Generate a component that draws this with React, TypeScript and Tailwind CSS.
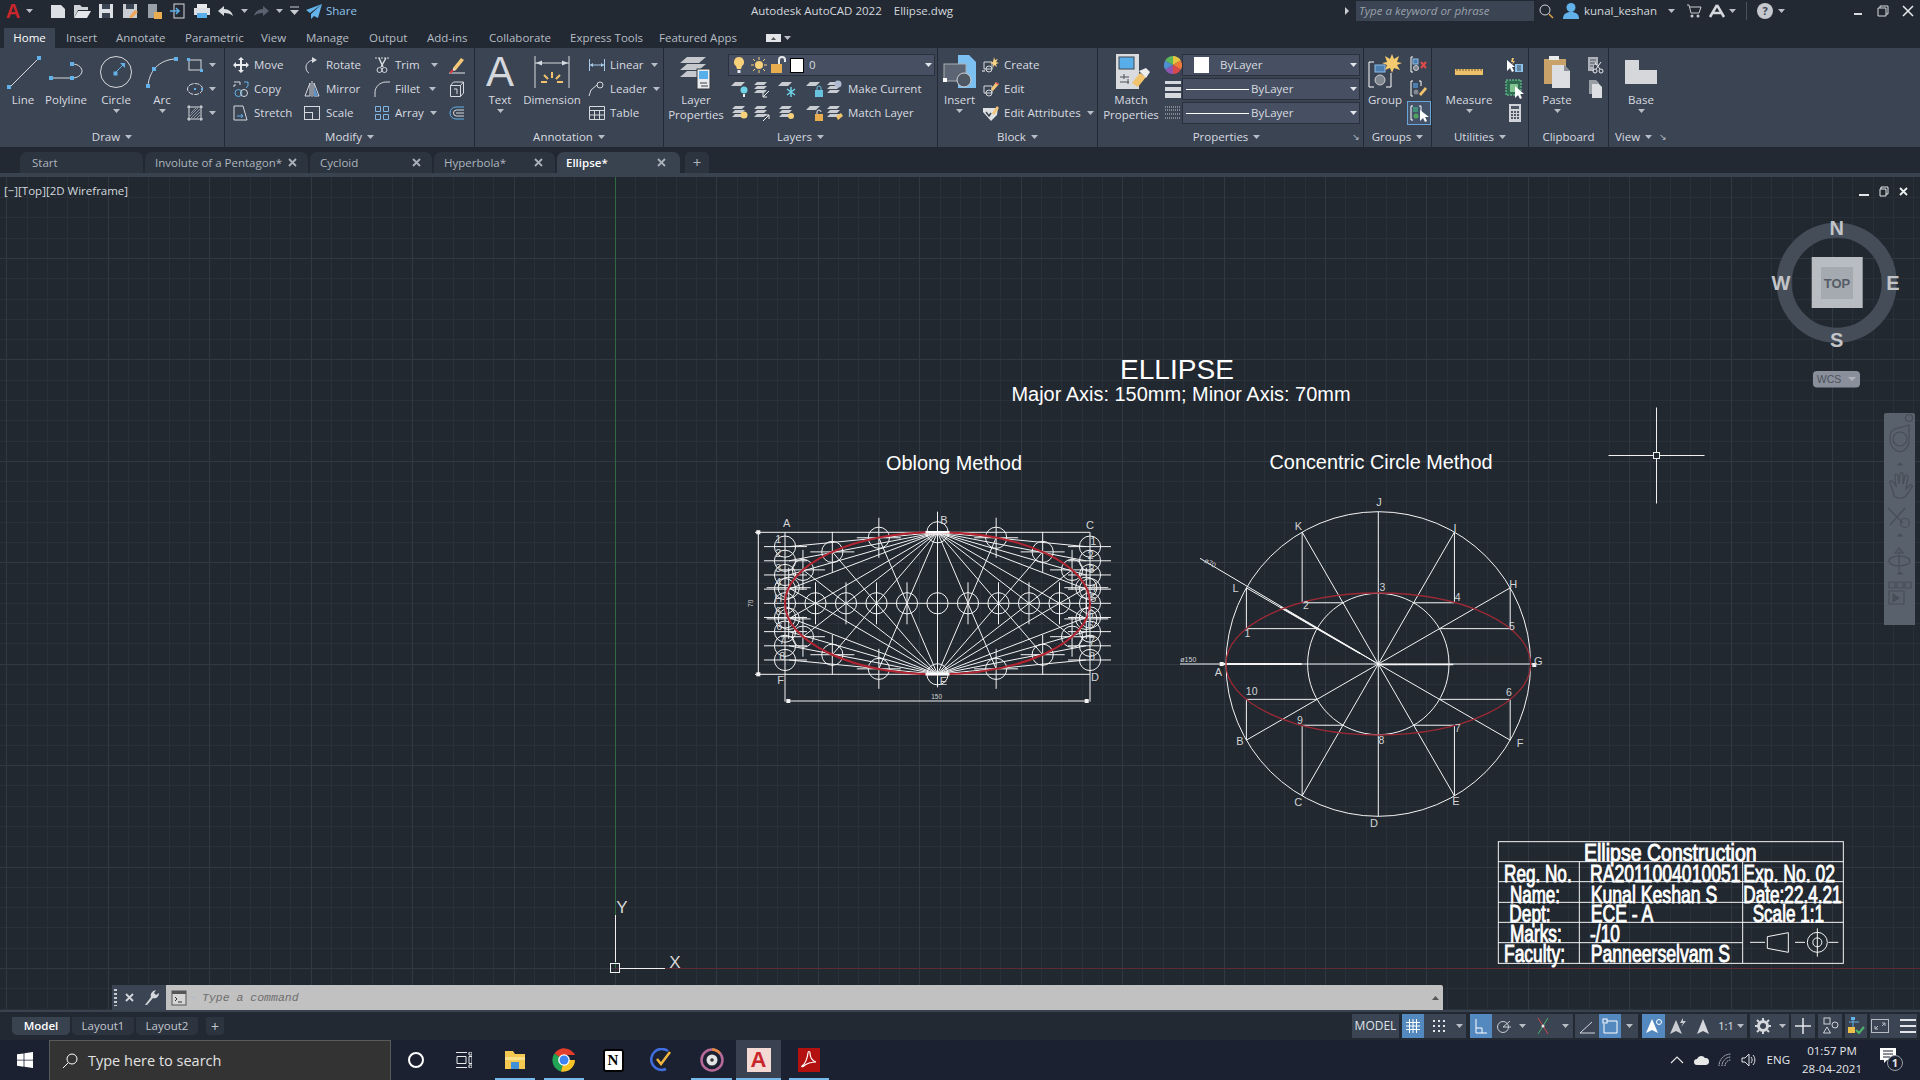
import type { ReactNode } from "react";

const GRIP = "#62b1e8";
const LT = "#d6d9de";

function Svg({ w = 18, h = 18, children }: { w?: number; h?: number; children: ReactNode }) {
  return (
    <svg width={w} height={h} viewBox={`0 0 ${w} ${h}`} fill="none" className="shrink-0">
      {children}
    </svg>
  );
}

function Caret({ light }: { light?: boolean }) {
  return (
    <svg width="7" height="4" viewBox="0 0 7 4" className="shrink-0">
      <path d="M0 0h7L3.5 4z" fill={light ? "#e2e5e9" : "#b9bec6"} />
    </svg>
  );
}

// ---------- ribbon icons ----------
const ic = {
  line: (
    <Svg w={40} h={36}>
      <path d="M7 33L35 5" stroke={LT} />
      <rect x="4" y="31" width="4" height="4" fill={GRIP} />
      <rect x="34" y="2" width="4" height="4" fill={GRIP} />
    </Svg>
  ),
  polyline: (
    <Svg w={46} h={36}>
      <path d="M8 24h21c8 0 10-5 10-7s-2-7-10-7" stroke={LT} />
      <rect x="6" y="22" width="4" height="4" fill={GRIP} />
      <rect x="27" y="22" width="4" height="4" fill={GRIP} />
      <rect x="27" y="8" width="4" height="4" fill={GRIP} />
    </Svg>
  ),
  circle: (
    <Svg w={46} h={36}>
      <circle cx="23" cy="18" r="15.5" stroke={LT} />
      <path d="M23 18l7-7" stroke={GRIP} />
      <path d="M27 9h5v5z" fill={GRIP} />
      <rect x="20.5" y="17.5" width="4" height="4" fill={GRIP} />
    </Svg>
  ),
  arc: (
    <Svg w={46} h={36}>
      <path d="M9 32C10 18 19 6 36 5" stroke={LT} />
      <rect x="7" y="30" width="4" height="4" fill={GRIP} />
      <rect x="35" y="3" width="4" height="4" fill={GRIP} />
      <rect x="13" y="13" width="4" height="4" fill={GRIP} />
    </Svg>
  ),
  rect: (
    <Svg>
      <rect x="3" y="4" width="12" height="10" stroke={LT} />
      <rect x="1" y="2" width="3" height="3" fill={GRIP} />
      <rect x="14" y="13" width="3" height="3" fill={GRIP} />
    </Svg>
  ),
  ell: (
    <Svg>
      <ellipse cx="9" cy="9" rx="7.5" ry="5.5" stroke={LT} strokeDasharray="5 1" />
      <rect x="8" y="8" width="2" height="2" fill={GRIP} />
      <rect x="15" y="8" width="2" height="2" fill={GRIP} />
    </Svg>
  ),
  hatch: (
    <Svg>
      <rect x="3" y="3" width="12" height="12" stroke={LT} />
      <path d="M4 12l8-8M4 15L15 4M7 15l8-8M5 9l5-5M10 15l5-5" stroke="#8a929e" />
      <path d="M1 3h3M3 1v3M14 15h3M15 14v3M1 15h3M3 14v3M14 3h3M15 1v3" stroke={LT} />
    </Svg>
  ),
  move: (
    <Svg>
      <path d="M9 1l3 3h-2v4h4V6l3 3-3 3v-2h-4v4h2l-3 3-3-3h2v-4H4v2L1 9l3-3v2h4V4H6z" fill="#e8eaed" />
    </Svg>
  ),
  copy: (
    <Svg>
      <path d="M2 2h6v3M1 6h2v-2" stroke={LT} />
      <path d="M12 2h4v4l-2 2" stroke={GRIP} />
      <circle cx="6.5" cy="13" r="3.5" stroke={GRIP} />
      <circle cx="12" cy="13" r="3.5" stroke={LT} />
    </Svg>
  ),
  stretch: (
    <Svg>
      <path d="M2 2h9l4 14H2z" stroke={LT} />
      <path d="M5 12h6M9 10l2 2-2 2" stroke={GRIP} />
    </Svg>
  ),
  rotate: (
    <Svg>
      <path d="M11 4C6 4 3 8 3 11c0 3 1 5 3 6" stroke={LT} />
      <path d="M9 1l5 3-5 3z" fill={LT} />
    </Svg>
  ),
  mirror: (
    <Svg>
      <path d="M7 3L2 16h5zM11 3l5 13h-5z" stroke={LT} />
      <path d="M9 1v16" stroke={LT} />
      <path d="M11 6l4 10h-4z" fill="#5d93c8" />
    </Svg>
  ),
  scale: (
    <Svg>
      <rect x="1.5" y="2.5" width="15" height="13" stroke={LT} />
      <rect x="1.5" y="8.5" width="8" height="7" stroke={LT} />
    </Svg>
  ),
  trim: (
    <Svg>
      <path d="M2 2h14" stroke={LT} strokeDasharray="2 1" />
      <path d="M6 2l4 9M13 2L8 11" stroke={LT} strokeWidth="1.5" />
      <circle cx="6.5" cy="14" r="2.5" stroke={LT} />
      <circle cx="11.5" cy="14" r="2.5" stroke={LT} />
    </Svg>
  ),
  fillet: (
    <Svg>
      <path d="M2 17v-5C2 7 7 2 13 2h4" stroke={LT} />
    </Svg>
  ),
  array: (
    <Svg>
      <path d="M2.5 2.5h5v5h-5zM10.5 2.5h5v5h-5zM2.5 10.5h5v5h-5zM10.5 10.5h5v5h-5z" stroke="#7fb6e6" />
    </Svg>
  ),
  erase: (
    <Svg>
      <path d="M5 12L13 2l3 2-8 10-3 1z" fill="#f3c778" />
      <path d="M5 12l3 2-3 1z" fill="#e8e8e8" />
      <path d="M1 17h16" stroke="#e4e6ea" />
      <path d="M2 17l3-3" stroke="#d93a3a" strokeWidth="2" />
    </Svg>
  ),
  explode: (
    <Svg>
      <path d="M2.5 5.5h10v11h-10zM2.5 5.5l3-3.5h10v11l-3 3.5M12.5 5.5l3-3.5" stroke={LT} />
      <path d="M6 9h3v5" stroke={LT} />
    </Svg>
  ),
  offset: (
    <Svg>
      <path d="M16 3H8a6 6 0 000 12h8" stroke={GRIP} />
      <path d="M16 6H8.5a3 3 0 000 6H16" stroke={LT} />
      <path d="M8 9h8" stroke={LT} />
    </Svg>
  ),
  textA: <span className="block text-[42px] leading-[40px] text-[#d4d7db] font-['Liberation_Sans',sans-serif]">A</span>,
  dim: (
    <Svg w={46} h={36}>
      <path d="M6 2v32M40 2v32" stroke={LT} />
      <path d="M6 9h34" stroke={LT} />
      <path d="M7 9l6-2.5v5zM39 9l-6-2.5v5z" fill={LT} />
      <path d="M23 18v6M15 21l4 4M31 21l-4 4M12 28h6M28 28h6" stroke="#f0c36c" strokeWidth="2" />
    </Svg>
  ),
  linear: (
    <Svg>
      <path d="M1.5 3v12M16.5 3v12M2 9h14" stroke="#a8cbea" />
      <path d="M2 9l3-2v4zM16 9l-3-2v4z" fill="#a8cbea" />
    </Svg>
  ),
  leader: (
    <Svg>
      <path d="M1 16l2-6 6-5" stroke={LT} />
      <circle cx="12" cy="5" r="3" stroke={LT} />
    </Svg>
  ),
  table: (
    <Svg>
      <path d="M1.5 2.5h15v13h-15zM1.5 6.5h15M1.5 11h15M6.5 6.5v9M11.5 6.5v9" stroke={LT} />
    </Svg>
  ),
  layers: (
    <Svg w={46} h={36}>
      <path d="M14 3h19l-7 6H7zM14 10h19l-7 6H7zM14 17h19l-7 6H7z" fill="#c5c8cd" />
      <rect x="24" y="15" width="13" height="20" fill="#e8eaec" stroke="#34393f" />
      <rect x="26" y="17" width="9" height="8" fill="#58aee8" />
      <path d="M27 29h7M28 32h7" stroke="#3a3f46" />
    </Svg>
  ),
  insert: (
    <Svg w={34} h={38}>
      <path d="M15 2h11l7 7v26H15z" fill="#7cc0f2" />
      <rect x="1" y="11" width="22" height="17" fill="#5c6573" stroke="#a9adb3" />
      <circle cx="21" cy="27" r="7" fill="#4f5865" stroke="#d0d2d6" />
      <rect x="0" y="25" width="4" height="4" fill="#fff" />
    </Svg>
  ),
  create: (
    <Svg>
      <path d="M2 6h8v7H2z" stroke={LT} />
      <circle cx="7" cy="13" r="3" stroke={LT} />
      <path d="M12 1l1 3 3-1-2 3 3 1-3 1 1 3-3-2-1 3V8L8 7l3-1z" fill="#f7d383" />
      <path d="M0 15h3" stroke="#fff" />
    </Svg>
  ),
  edit: (
    <Svg>
      <path d="M2 6h8v7H2z" stroke={LT} />
      <circle cx="7" cy="13" r="3" stroke={LT} />
      <path d="M9 9l5-7 3 2-6 7z" fill="#f3c778" />
      <path d="M14 2l3 2-1 1-3-2z" fill="#e05555" />
    </Svg>
  ),
  attrs: (
    <Svg>
      <path d="M1 4h8l7 0-1 7-6 6-8-9z" fill="#dfe1e4" />
      <path d="M4 8l3 4 2-3" stroke="#3b4453" strokeWidth="1.5" />
      <path d="M10 9l5-7 2 2-5 7z" fill="#f3c778" />
    </Svg>
  ),
  match: (
    <Svg w={46} h={38}>
      <rect x="8" y="1" width="23" height="35" fill="#d9dbde" />
      <rect x="11" y="4" width="15" height="12" fill="#58aee8" stroke="#3f4650" />
      <path d="M12 24h9M12 29h9M16 21v5M20 26v5" stroke="#4b5058" />
      <path d="M24 30l8-10 6 4-8 10z" fill="#f0c36c" />
      <path d="M31 18l7-3 4 4-4 6z" fill="#ededed" />
    </Svg>
  ),
  wheel: (
    <svg width="18" height="18" viewBox="0 0 18 18" className="shrink-0">
      <path d="M9 9V0a9 9 0 017.8 4.5z" fill="#e6c53f" />
      <path d="M9 9l7.8-4.5A9 9 0 0116.8 13.5z" fill="#ef7a3a" />
      <path d="M9 9l7.8 4.5A9 9 0 019 18z" fill="#d84a4a" />
      <path d="M9 9v9a9 9 0 01-7.8-4.5z" fill="#8f55b0" />
      <path d="M9 9L1.2 13.5a9 9 0 010-9z" fill="#4d8fd0" />
      <path d="M9 9L1.2 4.5A9 9 0 019 0z" fill="#5cb85c" />
    </svg>
  ),
  weight: (
    <Svg w={16} h={20}>
      <path d="M0 2h16v3H0zM0 8h16v4H0zM0 14h16v5H0z" fill="#d5d8dc" />
    </Svg>
  ),
  ltype: (
    <Svg w={16} h={16}>
      <path d="M0 2h16M0 5h16M0 9h16M0 13h16" stroke="#c7cacf" strokeDasharray="1 1" />
    </Svg>
  ),
  group: (
    <Svg w={42} h={38}>
      <path d="M10 9H5v25h5M22 34h5V20" stroke="#fff" />
      <rect x="11" y="12" width="10" height="7" fill="#4c7fb0" stroke="#90bde6" />
      <circle cx="16" cy="27" r="5" fill="#81878f" stroke="#c9ccd0" />
      <path d="M28 1l2 5 5-3-2 6 5 1-5 2 3 5-6-2-2 5-2-5-5 2 2-5-5-2 5-1-2-6 5 3z" fill="#f5c96e" />
    </Svg>
  ),
  ungroup: (
    <Svg>
      <path d="M3 1H1v15h2" stroke="#fff" />
      <rect x="3" y="3" width="5" height="5" fill="#4c7fb0" stroke="#90bde6" />
      <circle cx="6" cy="12" r="2.5" fill="#81878f" stroke="#c9ccd0" />
      <path d="M11 6l5 6M16 6l-5 6" stroke="#e04a4a" strokeWidth="2" />
    </Svg>
  ),
  gedit: (
    <Svg>
      <path d="M3 1H1v15h2M9 1h2v5" stroke="#fff" />
      <rect x="3" y="3" width="5" height="5" fill="#4c7fb0" />
      <circle cx="6" cy="12" r="2.5" fill="#81878f" />
      <path d="M9 14l6-7 2 2-6 7z" fill="#f0c36c" />
    </Svg>
  ),
  gsel: (
    <Svg w={22} h={22}>
      <path d="M5 4H3v14h2M11 4h2v6" stroke="#fff" />
      <rect x="5" y="5" width="5" height="5" fill="#3f8f7a" />
      <circle cx="8" cy="14" r="2.5" fill="#51a35c" />
      <path d="M12 8v11l3-3 2 4 2-1-2-4h4z" fill="#fff" />
    </Svg>
  ),
  measure: (
    <Svg w={46} h={28}>
      <rect x="9" y="11" width="28" height="6" fill="#eec06a" />
      <path d="M11 11v2M14 11v2M17 11v2M20 11v2M23 11v2M26 11v2M29 11v2M32 11v2M35 11v2" stroke="#6d5a30" />
    </Svg>
  ),
  qprops: (
    <Svg>
      <path d="M1 4v11l3-3 2 4 2-1-2-4h3z" fill="#fff" />
      <path d="M6 2l-1 4h2l-1 3 3-4H7l1-3z" fill="#f5c96e" />
      <rect x="9" y="8" width="8" height="8" fill="#8cc1ec" />
      <path d="M11 10h4M11 12h4M11 14h4" stroke="#3b4453" />
    </Svg>
  ),
  qsel: (
    <Svg w={20} h={22}>
      <rect x="1" y="2" width="15" height="15" fill="#2f6a52" stroke="#78d39a" strokeDasharray="2 1" />
      <rect x="5" y="6" width="8" height="8" fill="#7fc490" />
      <path d="M10 8v12l3-3 2 4 2-1-2-4h4z" fill="#fff" />
    </Svg>
  ),
  calc: (
    <Svg w={14} h={20}>
      <rect x="1" y="1" width="12" height="18" fill="#cfd2d6" />
      <rect x="3" y="3" width="8" height="3" fill="#4f5764" />
      <path d="M3 8h2v2H3zM6 8h2v2H6zM9 8h2v2H9zM3 11h2v2H3zM6 11h2v2H6zM9 11h2v2H9zM3 14h2v2H3zM6 14h2v2H6zM9 14h2v2H9z" fill="#4f5764" />
    </Svg>
  ),
  paste: (
    <Svg w={40} h={38}>
      <rect x="7" y="6" width="22" height="25" fill="#c9a26a" />
      <rect x="12" y="3" width="10" height="4" fill="#e9eaec" />
      <path d="M15 12h12l6 6v17H15z" fill="#dcdee1" />
      <path d="M27 12v6h6z" fill="#8a8e94" />
    </Svg>
  ),
  cut: (
    <Svg>
      <path d="M2 1h10v8H8v6H2z" fill="#aeb2b8" />
      <path d="M4 4h6M4 7h5M4 10h3" stroke="#4f5764" />
      <path d="M9 7l5 6M15 6l-5 7" stroke="#e8eaed" />
      <circle cx="9" cy="15" r="2" stroke="#e8eaed" />
      <circle cx="15" cy="15" r="2" stroke="#e8eaed" />
    </Svg>
  ),
  clipcopy: (
    <Svg w={16} h={20}>
      <path d="M2 1h7l3 3v11H2z" fill="#9a9ea5" />
      <path d="M5 5h7l3 3v11H5z" fill="#dcdee1" />
    </Svg>
  ),
  base: (
    <Svg w={40} h={36}>
      <path d="M4 6h14v10h18v14H4z" fill="#d5d7da" />
    </Svg>
  ),
};

function LayerGlyph({ accent, stack }: { accent: ReactNode; stack?: boolean }) {
  return (
    <Svg w={18} h={18}>
      {stack ? (
        <path d="M4 2h10l-3 3H1zM4 6h10l-3 3H1zM4 10h10l-3 3H1z" fill="#c9ccd1" />
      ) : (
        <path d="M4 2h10l-4 4H0z" fill="#c9ccd1" />
      )}
      {accent}
    </Svg>
  );
}

// ---------- ribbon layout ----------
function Lg({ className, icon, label, caret }: { className: string; icon: ReactNode; label: string[]; caret?: boolean }) {
  return (
    <div className={`flex flex-col items-center shrink-0 ${className}`}>
      <div className="h-[40px] flex items-center justify-center">{icon}</div>
      {label.map((l) => (
        <div key={l} className="leading-[15px] whitespace-nowrap">
          {l}
        </div>
      ))}
      {caret && (
        <div className="mt-[2px]">
          <Caret />
        </div>
      )}
    </div>
  );
}

function Sm({ icon, label, caret, gap = "ml-[3px]", caretGap = "ml-[8px]" }: { icon: ReactNode; label?: string; caret?: boolean; gap?: string; caretGap?: string }) {
  return (
    <div className="h-[24px] flex items-center whitespace-nowrap">
      <div className="w-[20px] flex justify-center shrink-0">{icon}</div>
      {label && <span className={gap}>{label}</span>}
      {caret && (
        <span className={caretGap}>
          <Caret />
        </span>
      )}
    </div>
  );
}

function Panel({ className, title, children, expander, left, noCaret, titleClass = "" }: { className: string; title: string; children: ReactNode; expander?: boolean; left?: boolean; noCaret?: boolean; titleClass?: string }) {
  return (
    <div className={`h-full shrink-0 flex flex-col border-r border-[#232a35] ${className}`}>
      <div className="h-[79px] flex items-start pt-[4px]">{children}</div>
      <div className={`h-[20px] relative flex items-center gap-[5px] ${left ? "pl-[6px]" : "justify-center"} ${titleClass}`}>
        <span>{title}</span>
        {!noCaret && <Caret />}
        {expander && <span className={left ? "ml-[2px] text-[9px] text-[#b9bec6]" : "absolute right-[3px] text-[9px] text-[#b9bec6]"}>↘</span>}
      </div>
    </div>
  );
}

function Drop({ className, children }: { className: string; children: ReactNode }) {
  return (
    <div className={`h-[22px] flex items-center bg-[#465062] border border-[#2a313c] ${className}`}>
      <div className="flex-1 flex items-center min-w-0">{children}</div>
      <span className="mr-[2px]">
        <Caret light />
      </span>
    </div>
  );
}

function Ribbon() {
  return (
    <div className="h-[99px] flex bg-[#3b4453] text-[#d8dbe0]">
      <Panel className="w-[225px]" title="Draw">
        <div className="flex">
          <Lg className="w-[40px] ml-[3px]" icon={ic.line} label={["Line"]} />
          <Lg className="w-[46px]" icon={ic.polyline} label={["Polyline"]} />
          <Lg className="w-[46px] ml-[4px]" icon={ic.circle} label={["Circle"]} caret />
          <Lg className="w-[46px]" icon={ic.arc} label={["Arc"]} caret />
          <div className="pt-[1px]">
            <Sm icon={ic.rect} caret caretGap="ml-[4px]" />
            <Sm icon={ic.ell} caret caretGap="ml-[4px]" />
            <Sm icon={ic.hatch} caret caretGap="ml-[4px]" />
          </div>
        </div>
      </Panel>
      <Panel className="w-[250px]" title="Modify">
        <div className="flex pt-[1px] pl-[6px]">
          <div className="w-[71px]">
            <Sm icon={ic.move} label="Move" />
            <Sm icon={ic.copy} label="Copy" />
            <Sm icon={ic.stretch} label="Stretch" />
          </div>
          <div className="w-[70px]">
            <Sm icon={ic.rotate} label="Rotate" gap="ml-[4px]" />
            <Sm icon={ic.mirror} label="Mirror" gap="ml-[4px]" />
            <Sm icon={ic.scale} label="Scale" gap="ml-[4px]" />
          </div>
          <div className="w-[75px]">
            <Sm icon={ic.trim} label="Trim" caret caretGap="ml-[11px]" />
            <Sm icon={ic.fillet} label="Fillet" caret caretGap="ml-[9px]" />
            <Sm icon={ic.array} label="Array" caret caretGap="ml-[6px]" />
          </div>
          <div>
            <Sm icon={ic.erase} />
            <Sm icon={ic.explode} />
            <Sm icon={ic.offset} />
          </div>
        </div>
      </Panel>
      <Panel className="w-[189px]" title="Annotation">
        <div className="flex">
          <Lg className="w-[50px]" icon={ic.textA} label={["Text"]} caret />
          <Lg className="w-[54px]" icon={ic.dim} label={["Dimension"]} />
          <div className="ml-[8px] pt-[1px]">
            <Sm icon={ic.linear} label="Linear" caret caretGap="ml-[7px]" />
            <Sm icon={ic.leader} label="Leader" caret caretGap="ml-[6px]" />
            <Sm icon={ic.table} label="Table" />
          </div>
        </div>
      </Panel>
      <Panel className="w-[274px]" title="Layers">
        <div className="flex">
          <Lg className="w-[64px]" icon={ic.layers} label={["Layer", "Properties"]} />
          <div className="w-[207px] pt-[2px]">
            <Drop className="w-[207px]">
              <div className="w-[20px] flex justify-center">
                <Svg w={12} h={18}>
                  <path d="M6 1a5 5 0 00-3 9l1 3h4l1-3a5 5 0 00-3-9z" fill="#f7d07a" />
                  <path d="M4.5 14h3v3h-3z" fill="#e6e8eb" />
                </Svg>
              </div>
              <div className="w-[20px] flex justify-center">
                <Svg w={16} h={16}>
                  <circle cx="8" cy="8" r="4" fill="#f7d07a" />
                  <path d="M8 0v3M8 13v3M0 8h3M13 8h3M2 2l2 2M12 12l2 2M14 2l-2 2M4 12l-2 2" stroke="#f7d07a" />
                </Svg>
              </div>
              <div className="w-[18px] flex justify-center">
                <Svg w={16} h={18}>
                  <rect x="1" y="8" width="11" height="9" fill="#e8ad4f" />
                  <path d="M9 8V4a3 3 0 016 0v2" stroke="#e8e9eb" strokeWidth="2" />
                </Svg>
              </div>
              <span className="w-[14px] h-[15px] bg-white border border-black ml-[3px]" />
              <span className="ml-[5px]">0</span>
            </Drop>
            <div className="flex items-center h-[24px] mt-[1px]">
              <div className="w-[24px] flex justify-center"><LayerGlyph accent={<><circle cx="13" cy="10" r="3.5" fill="#6fd3e8" /><path d="M12 14h2v3h-2z" fill="#eee" /></>} /></div>
              <div className="w-[20px] flex justify-center"><LayerGlyph stack accent={<path d="M10 17l6-6M10 13v4h4" stroke="#eee" />} /></div>
              <div className="w-[30px] flex justify-center"><LayerGlyph accent={<path d="M13 7v10M9 9l8 6M17 9l-8 6" stroke="#6fd3e8" strokeWidth="1.5" />} /></div>
              <div className="w-[26px] flex justify-center"><LayerGlyph accent={<><rect x="9" y="10" width="8" height="7" fill="#67c3e0" /><path d="M11 10V8a2 2 0 014 0v2" stroke="#67c3e0" /></>} /></div>
              <div className="w-[14px] flex justify-center"><LayerGlyph stack accent={<circle cx="12" cy="4" r="3.5" fill="#aebbd0" />} /></div>
              <span className="ml-[6px]">Make Current</span>
            </div>
            <div className="flex items-center h-[24px]">
              <div className="w-[24px] flex justify-center"><LayerGlyph stack accent={<circle cx="13" cy="11" r="3.5" fill="#f7d07a" />} /></div>
              <div className="w-[20px] flex justify-center"><LayerGlyph stack accent={<path d="M10 17l6-6M12 11h4v4" stroke="#eee" />} /></div>
              <div className="w-[30px] flex justify-center"><LayerGlyph stack accent={<circle cx="13" cy="12" r="3" fill="#f7d07a" />} /></div>
              <div className="w-[26px] flex justify-center"><LayerGlyph accent={<><rect x="9" y="10" width="8" height="7" fill="#e8ad4f" /><path d="M11 10V8a2 2 0 014 0" stroke="#e8e9eb" /></>} /></div>
              <div className="w-[14px] flex justify-center"><LayerGlyph stack accent={<path d="M10 12l5-3 2 3-5 4z" fill="#f0c36c" />} /></div>
              <span className="ml-[6px]">Match Layer</span>
            </div>
          </div>
        </div>
      </Panel>
      <Panel className="w-[160px]" title="Block">
        <div className="flex">
          <Lg className="w-[43px]" icon={ic.insert} label={["Insert"]} caret />
          <div className="pt-[1px]">
            <Sm icon={ic.create} label="Create" />
            <Sm icon={ic.edit} label="Edit" />
            <Sm icon={ic.attrs} label="Edit Attributes" caret caretGap="ml-[6px]" />
          </div>
        </div>
      </Panel>
      <Panel className="w-[266px]" title="Properties" expander titleClass="pr-[8px]">
        <div className="flex">
          <Lg className="w-[66px]" icon={ic.match} label={["Match", "Properties"]} />
          <div className="pt-[1px]">
            <div className="h-[24px] flex items-center">
              <div className="w-[18px] flex justify-center">{ic.wheel}</div>
              <Drop className="w-[178px]">
                <span className="w-[15px] h-[16px] bg-white ml-[11px]" />
                <span className="ml-[11px]">ByLayer</span>
              </Drop>
            </div>
            <div className="h-[24px] flex items-center">
              <div className="w-[18px] flex justify-center">{ic.weight}</div>
              <Drop className="w-[178px]">
                <span className="w-[63px] h-px bg-white ml-[3px]" />
                <span className="ml-[2px]">ByLayer</span>
              </Drop>
            </div>
            <div className="h-[24px] flex items-center">
              <div className="w-[18px] flex justify-center">{ic.ltype}</div>
              <Drop className="w-[178px]">
                <span className="w-[63px] h-px bg-white ml-[3px]" />
                <span className="ml-[2px]">ByLayer</span>
              </Drop>
            </div>
          </div>
        </div>
      </Panel>
      <Panel className="w-[68px]" title="Groups">
        <div className="flex">
          <Lg className="w-[42px]" icon={ic.group} label={["Group"]} />
          <div className="w-[26px] pt-[1px] flex flex-col items-center">
            <Sm icon={ic.ungroup} />
            <Sm icon={ic.gedit} />
            <div className="w-[24px] h-[24px] border border-[#6ca5d8] bg-[#445369]">{ic.gsel}</div>
          </div>
        </div>
      </Panel>
      <Panel className="w-[97px]" title="Utilities">
        <div className="flex">
          <Lg className="w-[74px]" icon={ic.measure} label={["Measure"]} caret />
          <div className="w-[18px] pt-[1px] flex flex-col items-center">
            <Sm icon={ic.qprops} />
            <Sm icon={ic.qsel} />
            <Sm icon={ic.calc} />
          </div>
        </div>
      </Panel>
      <Panel className="w-[80px]" title="Clipboard" noCaret>
        <div className="flex">
          <Lg className="w-[56px]" icon={ic.paste} label={["Paste"]} caret />
          <div className="w-[20px] pt-[1px] flex flex-col items-center">
            <Sm icon={ic.cut} />
            <Sm icon={ic.clipcopy} />
          </div>
        </div>
      </Panel>
      <Panel className="flex-1 border-r-0" title="View" expander left>
        <Lg className="w-[64px]" icon={ic.base} label={["Base"]} caret />
      </Panel>
    </div>
  );
}

// ---------- title bar ----------
function Ti({ children }: { children: ReactNode }) {
  return <div className="w-[24px] flex justify-center shrink-0">{children}</div>;
}

function TitleBar() {
  return (
    <div className="h-[28px] pb-[6px] flex items-center bg-[#222933] text-[#d4d8de]">
      <div className="w-[26px] text-center text-[#c9262c] font-bold text-[20px] leading-[22px] font-['Liberation_Sans',sans-serif]">A</div>
      <div className="w-[20px]"><Caret /></div>
      <Ti><Svg w={16} h={15}><path d="M1 1h10l4 4v9H1z" fill="#dcdfe3" /></Svg></Ti>
      <Ti><Svg w={18} h={15}><path d="M1 1h6l2 2h6v3H5l-4 8z" fill="#cfd2d6" /><path d="M5 7h13l-4 7H1z" fill="#e4e6e9" /></Svg></Ti>
      <Ti><Svg w={16} h={16}><path d="M1 1h14v14H1z" fill="#dcdfe3" /><path d="M4 1h8v5H4zM4 10h8v5H4z" fill="#3b4453" /></Svg></Ti>
      <Ti><Svg w={16} h={16}><path d="M1 1h14v14H1z" fill="#c9ccd1" /><path d="M4 1h8v5H4z" fill="#3b4453" /><path d="M7 14l6-7 3 2-6 6z" fill="#f0a35a" /></Svg></Ti>
      <Ti><Svg w={16} h={16}><rect x="2" y="1" width="9" height="14" fill="#9aa0a8" /><rect x="8" y="9" width="8" height="7" fill="#e8ad4f" /></Svg></Ti>
      <Ti><Svg w={16} h={16}><rect x="4" y="1" width="10" height="14" stroke="#d7dade" /><path d="M0 8h9M6 5l3 3-3 3" stroke="#5fb0e8" strokeWidth="1.5" /></Svg></Ti>
      <Ti><Svg w={18} h={16}><path d="M4 1h10v4H4z" fill="#e6e8eb" /><rect x="1" y="5" width="16" height="7" fill="#dcdfe3" /><path d="M4 10h10v5H4z" fill="#58aee8" /></Svg></Ti>
      <Ti><Svg w={18} h={14}><path d="M7 2L1 7l6 5V9c4 0 7 1 9 3-1-4-4-7-9-7z" fill="#d7dade" /></Svg></Ti>
      <div className="ml-[3px]"><Caret /></div>
      <div className="ml-[4px]"><Svg w={18} h={14}><path d="M11 2l6 5-6 5V9c-4 0-7 1-9 3 1-4 4-7 9-7z" fill="#5a6270" /></Svg></div>
      <div className="ml-[6px]"><Caret /></div>
      <div className="ml-[7px]"><Svg w={9} h={10}><path d="M0 1h9" stroke="#c9ccd1" /><path d="M0 4h9L4.5 9z" fill="#c9ccd1" /></Svg></div>
      <div className="ml-[6px]"><Svg w={18} h={16}><path d="M17 1L1 7l4 3zM17 1L6 11v5l3-3 4 2z" fill="#64b4ec" /></Svg></div>
      <span className="ml-[3px] text-[#8fc4ec]">Share</span>
      <span className="ml-[394px] whitespace-nowrap">Autodesk AutoCAD 2022</span>
      <span className="ml-[12px] whitespace-nowrap">Ellipse.dwg</span>
      <div className="ml-auto flex items-center">
        <Svg w={6} h={8}><path d="M1 0l4 4-4 4z" fill="#c9ccd1" /></Svg>
        <div className="ml-[6px] w-[178px] h-[20px] bg-[#3b4453] flex items-center pl-[3px] italic text-[#9aa1ac] whitespace-nowrap">Type a keyword or phrase</div>
        <div className="ml-[4px]">
          <Svg w={16} h={16}><circle cx="7" cy="7" r="5" stroke="#d0d3d8" /><path d="M11 11l4 4" stroke="#e3a34a" strokeWidth="1.5" /></Svg>
        </div>
        <div className="ml-[8px]">
          <Svg w={18} h={18}><circle cx="9" cy="5.5" r="4.5" fill="#62b1e8" /><path d="M1 17c0-5 3-7 8-7s8 2 8 7z" fill="#62b1e8" /></Svg>
        </div>
        <span className="ml-[4px] w-[84px] whitespace-nowrap">kunal_keshan</span>
        <Caret />
        <div className="ml-[11px]"><Svg w={16} h={16}><path d="M1 2h2l2 8h8l2-6H4" stroke="#c9ccd1" /><circle cx="6" cy="13" r="1.5" fill="#c9ccd1" /><circle cx="12" cy="13" r="1.5" fill="#c9ccd1" /></Svg></div>
        <div className="ml-[6px]"><Svg w={18} h={16}><path d="M9 2L2 14M9 2l7 12M5 10h8" stroke="#d4d7db" strokeWidth="2.5" /></Svg></div>
        <div className="ml-[3px]"><Caret /></div>
        <div className="ml-[10px] w-px h-[18px] bg-[#4a5260]" />
        <div className="ml-[10px] w-[16px] h-[16px] rounded-full bg-[#c5c8cc] text-[#3b4453] text-center leading-[16px] font-bold text-[11px]">?</div>
        <div className="ml-[5px]"><Caret /></div>
        <div className="ml-[69px]"><Svg w={8} h={8}><path d="M0 7h8" stroke="#d7dade" strokeWidth="2" /></Svg></div>
        <div className="ml-[15px]"><Svg w={12} h={12}><path d="M3 3V1h8v8H9M1 3h8v8H1z" stroke="#d7dade" /></Svg></div>
        <div className="ml-[13px] mr-[6px]"><Svg w={12} h={12}><path d="M1 1l10 10M11 1L1 11" stroke="#e8eaed" strokeWidth="1.5" /></Svg></div>
      </div>
    </div>
  );
}

const RIBBON_TABS = [
  { label: "Insert", w: "w-[50px]" },
  { label: "Annotate", w: "w-[69px]" },
  { label: "Parametric", w: "w-[76px]" },
  { label: "View", w: "w-[45px]" },
  { label: "Manage", w: "w-[63px]" },
  { label: "Output", w: "w-[58px]" },
  { label: "Add-ins", w: "w-[62px]" },
  { label: "Collaborate", w: "w-[81px]" },
  { label: "Express Tools", w: "w-[89px]" },
  { label: "Featured Apps", w: "w-[107px]" },
];

function TabRow() {
  return (
    <div className="h-[20px] flex items-center bg-[#222933] text-[#b6bcc4] whitespace-nowrap">
      <div className="ml-[4px] w-[51px] h-full bg-[#3b4453] text-white flex items-center justify-center mr-[11px]">Home</div>
      {RIBBON_TABS.map((t) => (
        <div key={t.label} className={t.w}>
          {t.label}
        </div>
      ))}
      <div className="w-[15px] h-[8px] bg-[#e2e4e7] flex items-center justify-center">
        <svg width="5" height="3" viewBox="0 0 5 3"><path d="M2.5 0L5 3H0z" fill="#555" /></svg>
      </div>
      <div className="ml-[3px]"><Caret /></div>
    </div>
  );
}

const DOC_TABS = [
  { label: "Start", w: "w-[123px]", pl: "pl-[12px]", pr: "pr-[10px]" },
  { label: "Involute of a Pentagon*", w: "w-[163px]", pl: "pl-[10px]", pr: "pr-[11px]", x: true },
  { label: "Cycloid", w: "w-[122px]", pl: "pl-[10px]", pr: "pr-[11px]", x: true },
  { label: "Hyperbola*", w: "w-[121px]", pl: "pl-[10px]", pr: "pr-[12px]", x: true },
  { label: "Ellipse*", w: "w-[123px]", pl: "pl-[9px]", pr: "pr-[14px]", x: true, active: true },
];

function X({ color = "#aab0b8" }: { color?: string }) {
  return (
    <svg width="9" height="9" viewBox="0 0 9 9" className="shrink-0">
      <path d="M1 1l7 7M8 1L1 8" stroke={color} strokeWidth="1.8" />
    </svg>
  );
}

function DocTabs() {
  return (
    <div className="h-[30px] bg-[#222933] flex flex-col">
      <div className="h-[26px] flex items-end pl-[20px] gap-[2px] text-[#aeb4bc] whitespace-nowrap">
        {DOC_TABS.map((t) => (
          <div key={t.label} className={`h-[21px] rounded-t-[7px] flex items-center justify-between ${t.w} ${t.pl} ${t.pr} ${t.active ? "bg-[#39424f] text-white font-semibold" : "bg-[#2c3440]"}`}>
            <span>{t.label}</span>
            {t.x && <X />}
          </div>
        ))}
        <div className="h-[21px] w-[24px] rounded-t-[5px] bg-[#2c3440] flex items-center justify-center text-[15px] leading-none ml-[3px]">+</div>
      </div>
      <div className="h-[4px] bg-[#39424f]" />
    </div>
  );
}

// ---------- drawings ----------
const WHITE = "#f4f4f4";

function OblongDrawing() {
  const cx = 937.5;
  const cy = 603.3;
  const a = 152.5;
  const b = 71;
  const step = 14.17;
  const ts = [0.2, 0.4, 0.6, 0.8];
  const zx = (v: number) => 740 + v / 3;
  const zy = (v: number) => 490 + v / 3;
  const labels: [string, number, number][] = [
    ["A", 140, 112], ["B", 612, 102], ["C", 1050, 118], ["D", 1065, 572], ["E", 610, 585], ["F", 122, 583], ["H", 115, 335],
    ["1", 115, 158], ["2", 115, 202], ["3", 115, 247], ["4", 115, 289], ["6", 115, 374], ["6", 118, 420], ["7", 127, 462], ["8", 127, 510],
    ["1", 1060, 166], ["2", 1052, 208], ["3", 1055, 250], ["4", 1060, 305], ["5", 1060, 336], ["6", 1052, 384], ["6", 1052, 418], ["7", 1056, 466], ["8", 1056, 510],
  ];
  return (
    <g stroke={WHITE} strokeWidth="1" fill="none">
      <path d={`M${zx(45)} ${cy - b}H${cx + a}M${zx(45)} ${cy + b}H${cx + a}M${cx - a} ${cy - b}V${zy(635)}M${cx + a} ${cy - b}V${zy(635)}`} />
      <path d={`M${cx} ${zy(65)}V${zy(592)}M${zx(72)} ${cy}H${zx(1113)}`} />
      <path d={`M${zx(55)} ${cy - b}V${cy + b}M${zx(145)} ${zy(633)}H${zx(1045)}`} />
      {[-4, -3, -2, -1, 1, 2, 3, 4].map((k) => (
        <g key={k}>
          <path d={`M${zx(72)} ${cy + k * step}H${cx - a + 22}M${cx + a - 22} ${cy + k * step}H${zx(1113)}`} />
          <circle cx={cx - a} cy={cy + k * step} r="10.6" />
          <circle cx={cx + a} cy={cy + k * step} r="10.6" />
          <path d={`M${cx} ${k < 0 ? cy - b : cy + b}L${cx - a + 4} ${cy + k * step}M${cx} ${k < 0 ? cy - b : cy + b}L${cx + a - 4} ${cy + k * step}`} />
        </g>
      ))}
      <circle cx={cx - a} cy={cy} r="10.6" />
      <circle cx={cx + a} cy={cy} r="10.6" />
      <circle cx={cx} cy={cy - b} r="10.6" />
      <circle cx={cx} cy={cy + b} r="10.6" />
      {[-4, -3, -2, -1, 0, 1, 2, 3, 4].map((j) => (
        <g key={j}>
          <circle cx={cx + j * 30.5} cy={cy} r="10.6" />
          {j !== 0 && <path d={`M${cx + j * 30.5} ${cy - 21}V${cy + 21}`} />}
        </g>
      ))}
      {ts.flatMap((t) => {
        const qx = (2 * t * a) / (1 + t * t);
        const qy = (b * (1 - t * t)) / (1 + t * t);
        return [-1, 1].flatMap((sx) =>
          [-1, 1].map((sy) => (
            <g key={`${t}${sx}${sy}`}>
              <path d={`M${cx} ${cy - sy * b}L${cx + sx * qx} ${cy + sy * qy}`} />
              <circle cx={cx + sx * qx} cy={cy + sy * qy} r="10.6" />
              <path d={`M${cx + sx * qx} ${cy + sy * qy - 20}V${cy + sy * qy + 20}M${cx + sx * qx - 22} ${cy + sy * qy}H${cx + sx * qx + 22}`} />
            </g>
          )),
        );
      })}
      <ellipse cx={cx} cy={cy} rx={a} ry={b} stroke="#b32430" strokeWidth="2" />
      <path d={`M${cx - 12} ${cy - b}h24M${cx - 12} ${cy + b}h24`} stroke="#fff" strokeWidth="2.5" />
      <rect x={zx(55) - 1.5} y={cy - b - 1.5} width="3" height="3" fill={WHITE} />
      <rect x={zx(55) - 1.5} y={cy + b - 1.5} width="3" height="3" fill={WHITE} />
      <rect x={zx(145) - 1.5} y={zy(633) - 1.5} width="3" height="3" fill={WHITE} />
      <rect x={zx(1040) - 1.5} y={zy(633) - 1.5} width="3" height="3" fill={WHITE} />
      <g stroke="none" fill="#d2d4d6" fontSize="11" textAnchor="middle">
        {labels.map(([t, x, y], i) => (
          <text key={i} x={zx(x)} y={zy(y)}>
            {t}
          </text>
        ))}
        <text x={zx(590)} y={zy(628)} fontSize="6.5">150</text>
        <text x={zx(40)} y={zy(340)} fontSize="6.5" transform={`rotate(-90 ${zx(40)} ${zy(340)})`}>70</text>
      </g>
    </g>
  );
}

function CircleDrawing() {
  const cx = 1378.3;
  const cy = 664;
  const R = 152.3;
  const r = 70.7;
  const angles = [30, 60, 120, 150, 210, 240, 300, 330];
  const zx = (v: number) => 1160 + v / 3;
  const zy = (v: number) => 490 + v / 3;
  const labels: [string, number, number][] = [
    ["J", 657, 48], ["K", 415, 120], ["I", 885, 125], ["H", 1060, 295], ["G", 1135, 525], ["F", 1080, 770], ["E", 888, 946], ["D", 642, 1012], ["C", 415, 947], ["B", 240, 766], ["A", 175, 557], ["L", 227, 307],
  ];
  const nums: [string, number, number][] = [
    ["1", 262, 440], ["2", 438, 358], ["3", 667, 304], ["4", 893, 333], ["5", 1056, 420], ["6", 1047, 618], ["7", 893, 726], ["8", 664, 763], ["9", 420, 703], ["10", 275, 616],
  ];
  return (
    <g stroke={WHITE} strokeWidth="1" fill="none">
      <circle cx={cx} cy={cy} r={R} />
      <circle cx={cx} cy={cy} r={r} />
      <path d={`M${cx} ${cy - R}V${cy + R}M${zx(60)} ${cy}H${zx(1125)}`} />
      <path d={`M${zx(190)} ${cy}H${zx(425)}`} strokeWidth="2" />
      <path d={`M${cx} ${cy + 0.5}H${zx(880)}`} strokeWidth="1.5" />
      {angles.map((d) => {
        const c = Math.cos((d * Math.PI) / 180);
        const s = Math.sin((d * Math.PI) / 180);
        return (
          <path key={d} d={`M${cx} ${cy}L${cx + R * c} ${cy + R * s}V${cy + r * s}H${cx + r * c}`} />
        );
      })}
      <path d={`M${zx(120)} ${zy(205)}L${cx} ${cy}`} />
      <path d={`M${zx(360)} ${zy(351)}L${zx(600)} ${zy(490)}`} strokeWidth="1.5" />
      <ellipse cx={cx} cy={cy} rx={R} ry={71} stroke="#9c2a35" strokeWidth="1.3" />
      <rect x={zx(185) - 1.5} y={cy - 1.5} width="3" height="3" fill={WHITE} />
      <rect x={zx(1123) - 1.5} y={cy - 0.5} width="3" height="3" fill={WHITE} />
      <g stroke="none" fill="#d2d4d6" fontSize="11" textAnchor="middle">
        {labels.map(([t, x, y]) => (
          <text key={t} x={zx(x)} y={zy(y)}>
            {t}
          </text>
        ))}
      </g>
      <g stroke="none" fill="#d2d4d6" fontSize="10.5" textAnchor="middle">
        {nums.map(([t, x, y]) => (
          <text key={t} x={zx(x)} y={zy(y)}>
            {t}
          </text>
        ))}
        <text x={zx(85)} y={zy(516)} fontSize="7">ø150</text>
        <text x={zx(147)} y={zy(225)} fontSize="7" transform={`rotate(30 ${zx(147)} ${zy(225)})`}>ø70</text>
      </g>
    </g>
  );
}

const BLOCK_TEXT: [string, number, number, number][] = [
  ["Ellipse Construction", 312, 830, 122],
  ["Reg. No.", 72, 275, 187],
  ["RA2011004010051", 330, 782, 187],
  ["Exp. No. 02", 790, 1065, 187],
  ["Name:", 90, 240, 248],
  ["Kunal Keshan S", 332, 712, 248],
  ["Date:22.4.21", 790, 1085, 248],
  ["Dept:", 88, 212, 307],
  ["ECE - A", 332, 520, 307],
  ["Scale 1:1", 818, 1032, 307],
  ["Marks:", 90, 245, 367],
  ["-/10", 330, 420, 367],
  ["Faculty:", 72, 255, 425],
  ["Panneerselvam S", 332, 750, 425],
];

function TitleBlock() {
  const zx = (v: number) => 1480 + v / 3;
  const zy = (v: number) => 820 + v / 3;
  return (
    <g stroke={WHITE} strokeWidth="1" fill="none">
      <rect x={zx(55)} y={zy(65)} width={345} height={121.7} />
      <path d={`M${zx(55)} ${zy(125)}H${zx(1090)}M${zx(55)} ${zy(185)}H${zx(1090)}M${zx(55)} ${zy(247)}H${zx(1090)}M${zx(55)} ${zy(307)}H${zx(1090)}M${zx(55)} ${zy(368)}H${zx(788)}`} />
      <path d={`M${zx(298)} ${zy(125)}V${zy(430)}M${zx(788)} ${zy(125)}V${zy(430)}`} />
      {BLOCK_TEXT.map(([t, x1, x2, y]) => (
        <text key={t} x={zx(x1)} y={zy(y)} fontSize="23.5" fill="#fff" stroke="#fff" strokeWidth="0.9" textLength={(x2 - x1) / 3} lengthAdjust="spacingAndGlyphs">
          {t}
        </text>
      ))}
      <path d={`M${zx(810)} ${zy(367)}H${zx(855)}M${zx(945)} ${zy(367)}H${zx(975)}M${zx(1045)} ${zy(367)}H${zx(1075)}M${zx(1012)} ${zy(325)}V${zy(410)}`} />
      <path d={`M${zx(862)} ${zy(350)}L${zx(925)} ${zy(338)}V${zy(397)}L${zx(862)} ${zy(385)}z`} />
      <circle cx={zx(1012)} cy={zy(367)} r="10" />
      <circle cx={zx(1012)} cy={zy(367)} r="4.5" />
    </g>
  );
}

function ViewCube() {
  return (
    <svg width="150" height="240" viewBox="1770 210 150 240" className="absolute left-[1770px] top-[33px] font-['Liberation_Sans',sans-serif]">
      <circle cx="1836.7" cy="282.7" r="52.5" stroke="#454d59" strokeWidth="15" fill="none" />
      <rect x="1811.7" y="257" width="51" height="51" fill="#b9bcc0" />
      <rect x="1821" y="267" width="32" height="32" fill="#a5aab0" />
      <text x="1837" y="288" textAnchor="middle" fontSize="13" fontWeight="700" fill="#555c66">TOP</text>
      <g fontSize="20" fontWeight="700" fill="#c2c4c7" textAnchor="middle">
        <text x="1836.7" y="235">N</text>
        <text x="1836.7" y="347">S</text>
        <text x="1781" y="290">W</text>
        <text x="1893" y="290">E</text>
      </g>
      <rect x="1813" y="371" width="47" height="16.5" rx="4" fill="#8a909b" />
      <text x="1829" y="383" textAnchor="middle" fontSize="10.5" fill="#4c515b">WCS</text>
      <path d="M1848 377h8l-4 4z" fill="#b0b5bd" />
    </svg>
  );
}

function NavBar() {
  return (
    <div className="absolute left-[1884px] top-[236px] w-[31px] h-[212px] bg-[#59616c] rounded-t-[2px]">
      <svg width="31" height="212" viewBox="0 0 31 212" fill="none" stroke="#484e58" strokeWidth="1.2">
        <circle cx="25" cy="5" r="3.5" />
        <path d="M6 25c0-10 6-9 12-11l7-2v18c-2 7-8 10-12 8s-7-7-7-13z" />
        <circle cx="16" cy="26" r="7" />
        <path d="M16 50l-2 2h4z" fill="#484e58" />
        <path d="M9 78l-3-8c-1-2 1-3 3-1l3 4-1-10c0-3 2-3 3 0l1 8 1-10c0-2 3-2 3 0l0 10 2-8c1-2 3-1 3 1l-2 12 4-4c2-1 3 1 2 2l-6 9c-3 3-9 3-12 0z" />
        <path d="M4 95l15 15M21 95L6 112" />
        <circle cx="21" cy="110" r="4.5" />
        <path d="M16 121l-2 2h4z" fill="#484e58" />
        <path d="M15 138v20M15 135l-4 5h8zM5 148c0-3 5-5 10-5s11 2 11 5-6 5-11 5-10-2-10-5z" />
        <path d="M16 159l-2 2h4z" fill="#484e58" />
        <path d="M5 169h6v6H5zM13 169h6v6h-6zM21 169h6v6h-6zM5 178h15v13H5z" />
        <path d="M9 181l6 4-6 4z" fill="#484e58" />
      </svg>
    </div>
  );
}

// grid lines land on whole pixels so they stay one crisp pixel wide
function gridPath(div: number) {
  const s = 101.43 / div;
  let d = "";
  for (let i = Math.ceil(-615 / s); 615 + i * s < 1920; i++) {
    const x = Math.round(615 + i * s) + 0.5;
    d += `M${x} 177V1010`;
  }
  for (let i = Math.ceil((177 - 968) / s); 968 + i * s < 1010; i++) {
    const y = Math.round(968 + i * s) + 0.5;
    d += `M0 ${y}H1920`;
  }
  return d;
}

function Canvas() {
  return (
    <div className="h-[833px] relative overflow-hidden bg-[#212830]">
      <svg width="1920" height="833" viewBox="0 177 1920 833" className="block font-['Liberation_Sans',sans-serif]">
        <path d={gridPath(5)} stroke="#29303a" />
        <path d={gridPath(1)} stroke="#313944" />
        <path d="M615.5 177V968" stroke="#2f6b3f" />
        <path d="M615 968.5H1920" stroke="#5c2b33" />
        <g fill="#fff" textAnchor="middle">
          <text x="1177" y="379" fontSize="28" textLength="114" lengthAdjust="spacingAndGlyphs">ELLIPSE</text>
          <text x="1181" y="401" fontSize="20" textLength="339" lengthAdjust="spacingAndGlyphs">Major Axis: 150mm; Minor Axis: 70mm</text>
          <text x="954" y="470" fontSize="20" textLength="136" lengthAdjust="spacingAndGlyphs">Oblong Method</text>
          <text x="1381" y="469" fontSize="20" textLength="223" lengthAdjust="spacingAndGlyphs">Concentric Circle Method</text>
        </g>
        <OblongDrawing />
        <CircleDrawing />
        <TitleBlock />
        <g stroke="#f0f0f0" fill="none">
          <path d="M615.5 962V915M620 968.5H665" />
          <rect x="610.5" y="963.5" width="9" height="9" />
          <path d="M1656.5 407.5V503.5M1608.5 455.5H1704.5" />
          <rect x="1653.5" y="452.5" width="6" height="6" fill="#212830" />
        </g>
        <g fill="#d8d8d8" fontSize="17" textAnchor="middle">
          <text x="622" y="913">Y</text>
          <text x="675" y="968">X</text>
        </g>
      </svg>

      <div className="absolute left-[4px] top-[7px] text-[#d4d8de] leading-[14px] whitespace-nowrap">[−][Top][2D Wireframe]</div>
      <div className="absolute right-[12px] top-[9px] flex items-center gap-[10px]">
        <Svg w={10} h={10}><path d="M0 8h10" stroke="#e4e6e9" strokeWidth="2" /></Svg>
        <Svg w={10} h={11}><path d="M2 3V1h7v7H7M1 3h6v7H1z" stroke="#e4e6e9" /></Svg>
        <X color="#eceef0" />
      </div>

      <ViewCube />
      <NavBar />

      <div className="absolute left-[112px] right-[477px] bottom-0 h-[25px] flex items-stretch">
        <div className="w-[54px] bg-[#3b4453] flex items-center pl-[2px]">
          <div className="w-[3px] h-[17px] bg-[repeating-linear-gradient(#c9ccd1_0_2px,transparent_2px_4px)]" />
          <span className="ml-[8px]"><X color="#d4d7db" /></span>
          <span className="ml-[8px]">
            <Svg w={17} h={17}><path d="M3 16l6-8c-1-3 1-6 5-7l-2 3 2 2 3-2c0 4-3 6-6 5l-6 7z" fill="#d4d7db" /></Svg>
          </span>
        </div>
        <div className="flex-1 bg-[#c1c1c1] rounded-tr-[2px] flex items-center">
          <div className="ml-[5px]">
            <Svg w={16} h={16}><rect x="1" y="1" width="14" height="14" fill="#d5d5d5" stroke="#555" /><path d="M1 1h14v3H1z" fill="#555" /><path d="M4 7l2 2-2 2M7 12h4" stroke="#333" /></Svg>
          </div>
          <span className="ml-[3px]"><Caret /></span>
          <span className="ml-[5px] italic text-[#6e6e6e] font-['Liberation_Mono',monospace] text-[11.5px]">Type a command</span>
          <svg width="7" height="4" viewBox="0 0 7 4" className="ml-auto mr-[4px]"><path d="M3.5 0L7 4H0z" fill="#555" /></svg>
        </div>
      </div>
    </div>
  );
}

// ---------- status bar ----------
function St({ className, children, active }: { className: string; children?: ReactNode; active?: boolean }) {
  return <div className={`h-full flex items-center justify-center shrink-0 ${active ? "bg-[#5489c0]" : ""} ${className}`}>{children}</div>;
}

function StatusBar() {
  return (
    <div className="h-[30px] flex items-center bg-[#222933] border-t-2 border-[#39424f] text-[#c2c7ce] relative">
      <div className="flex items-center ml-[12px] h-[18px]">
        <div className="w-[58px] h-full bg-[#39424f] rounded-b-[5px] flex items-center justify-center text-white font-semibold">Model</div>
        <div className="w-[62px] ml-[2px] h-full bg-[#2c3440] rounded-b-[5px] flex items-center justify-center">Layout1</div>
        <div className="w-[62px] ml-[2px] h-full bg-[#2c3440] rounded-b-[5px] flex items-center justify-center">Layout2</div>
        <div className="w-[18px] ml-[8px] h-full bg-[#2c3440] rounded-b-[4px] flex items-center justify-center text-[14px]">+</div>
      </div>
      <div className="ml-auto mr-[3px] flex h-[24px] text-[#dfe2e6]">
        <St className="w-[47px] bg-[#3b4453] text-[12px]">MODEL</St>
        <div className="ml-[3px] flex w-[64px] bg-[#3b4453] h-full">
          <St active className="w-[22px]">
            <Svg w={16} h={16}><path d="M1 4.5h14M1 8h14M1 11.5h14M4.5 1v14M8 1v14M11.5 1v14" stroke="#fff" /></Svg>
          </St>
          <St className="w-[29px]">
            <Svg w={14} h={14}><path d="M1 1h2v2H1zM6 1h2v2H6zM11 1h2v2h-2zM1 6h2v2H1zM6 6h2v2H6zM11 6h2v2h-2zM1 11h2v2H1zM6 11h2v2H6zM11 11h2v2h-2z" fill="#e2e5e9" /></Svg>
          </St>
          <St className="w-[13px]"><Caret /></St>
        </div>
        <div className="ml-[4px] flex w-[103px] bg-[#3b4453] h-full">
          <St active className="w-[22px]">
            <Svg w={16} h={16}><path d="M3 1v14h11M3 10h6v5" stroke="#fff" /></Svg>
          </St>
          <St className="w-[24px]">
            <Svg w={16} h={16}><circle cx="7" cy="9" r="5.5" stroke="#c9ccd1" /><path d="M7 9l7-6M7 9h8" stroke="#c9ccd1" /></Svg>
          </St>
          <St className="w-[12px]"><Caret /></St>
          <St className="w-[29px]">
            <Svg w={16} h={18}><path d="M3 1l10 16" stroke="#d04a4a" /><path d="M13 1L3 17" stroke="#4caf6a" /><circle cx="8" cy="9" r="1.5" fill="#e6e6e6" /></Svg>
          </St>
          <St className="w-[16px]"><Caret /></St>
        </div>
        <div className="ml-[2px] flex w-[63px] bg-[#3b4453] h-full">
          <St className="w-[24px]">
            <Svg w={17} h={15}><path d="M1 14h15M1 14L13 3" stroke="#d5d8dc" /></Svg>
          </St>
          <St active className="w-[22px]">
            <Svg w={16} h={16}><path d="M5 3h10v12H2V6" stroke="#fff" /><rect x="1" y="1" width="4" height="4" stroke="#fff" /></Svg>
          </St>
          <St className="w-[17px]"><Caret /></St>
        </div>
        <div className="ml-[4px] flex w-[105px] bg-[#3b4453] h-full">
          <St active className="w-[23px]">
            <Svg w={18} h={18}><path d="M7 2L1 16l6-3 6 3z" fill="#fff" /><circle cx="14" cy="5" r="2.5" stroke="#fff" /></Svg>
          </St>
          <St className="w-[26px]">
            <Svg w={18} h={18}><path d="M7 3L1 17l6-3 6 3z" fill="#c9ccd1" /><path d="M14 1l-3 5h3l-2 4 5-6h-3z" fill="#c9ccd1" /></Svg>
          </St>
          <St className="w-[24px]">
            <Svg w={16} h={17}><path d="M8 1L2 16l6-3 6 3z" fill="#d5d8dc" /></Svg>
          </St>
          <St className="w-[32px] text-[11px] gap-[3px]">1:1 <Caret /></St>
        </div>
        <div className="ml-[3px] flex w-[39px] bg-[#3b4453] h-full items-center">
          <St className="w-[25px]">
            <Svg w={16} h={16}><circle cx="8" cy="8" r="4.5" stroke="#d5d8dc" strokeWidth="3" /><path d="M8 0v3M8 13v3M0 8h3M13 8h3M2 2l2 2M12 12l2 2M14 2l-2 2M4 12l-2 2" stroke="#d5d8dc" strokeWidth="2" /></Svg>
          </St>
          <St className="w-[14px]"><Caret /></St>
        </div>
        <St className="ml-[2px] w-[24px] bg-[#3b4453]">
          <Svg w={16} h={16}><path d="M8 0v16M0 8h16" stroke="#e6e8eb" strokeWidth="1.5" /></Svg>
        </St>
        <St className="ml-[3px] w-[24px] bg-[#3b4453]">
          <Svg w={18} h={18}><rect x="3" y="1" width="6" height="6" stroke="#cfd2d6" /><circle cx="14" cy="8" r="3" stroke="#cfd2d6" /><path d="M6 10l-3.5 6h7z" stroke="#cfd2d6" /></Svg>
        </St>
        <St className="ml-[3px] w-[22px] bg-[#3b4453]">
          <Svg w={18} h={20}><path d="M6 2v14M2 6h10" stroke={GRIP} /><rect x="4" y="1" width="4" height="3" fill={GRIP} /><rect x="1" y="11" width="7" height="6" fill="#eec04a" /><path d="M9 14l3 3 5-6" stroke="#4fb56b" strokeWidth="2" /></Svg>
        </St>
        <div className="ml-[3px] flex items-center justify-between w-[47px] bg-[#3b4453] h-full pl-[1px]">
          <Svg w={18} h={14}><rect x=".5" y=".5" width="17" height="13" stroke="#b8bcc3" /><path d="M4 10l3-3M4 7v3h3M14 4l-3 3M14 7V4h-3" stroke="#b8bcc3" /></Svg>
          <Svg w={18} h={16}><path d="M1 2h16M1 8h16M1 14h16" stroke="#e2e5e9" strokeWidth="2" /></Svg>
        </div>
      </div>
    </div>
  );
}

function Task({ className, underline, active, children }: { className: string; underline?: boolean; active?: boolean; children: ReactNode }) {
  return (
    <div className={`h-full flex items-center justify-center relative shrink-0 ${active ? "bg-[#3a4150]" : ""} ${className}`}>
      {children}
      {underline && <div className="absolute bottom-0 left-0 right-0 h-[2px] bg-[#76b9ed]" />}
    </div>
  );
}

function Taskbar() {
  return (
    <div className="h-[40px] flex items-center bg-[#1b2130] text-white">
      <div className="w-[49px] flex justify-center">
        <Svg w={16} h={16}><path d="M0 2.3l6.6-.9v6.3H0zM7.4 1.3L16 0v7.7H7.4zM0 8.5h6.6v6.3L0 13.8zM7.4 8.5H16V16l-8.6-1.2z" fill="#fff" /></Svg>
      </div>
      <div className="w-[342px] h-full bg-[#333333] border border-[#5a5a5a] border-b-0 flex items-center pl-[12px]">
        <Svg w={16} h={16}><circle cx="10" cy="6" r="5" stroke="#fff" /><path d="M6 10l-5 5" stroke="#fff" /></Svg>
        <span className="ml-[10px] text-[14.5px] text-[#e2e2e2] font-['Open_Sans',sans-serif] whitespace-nowrap">Type here to search</span>
      </div>
      <Task className="w-[50px]">
        <div className="w-[16px] h-[16px] rounded-full border-2 border-white" />
      </Task>
      <Task className="w-[28px] ml-[9px]">
        <Svg w={16} h={16}><path d="M0 .5h11M0 15.5h11M1 4.5h9v7H1zM13 0h3v3h-3zM13 4.5h3v7h-3zM13 13h3v3h-3z" stroke="#fff" strokeWidth=".9" /></Svg>
      </Task>
      <Task className="w-[40px] ml-[17px]" underline>
        <Svg w={22} h={20}><path d="M1 1h8l2 3h10v15H1z" fill="#f5c851" /><rect x="7" y="12" width="8" height="7" fill="#3f90d6" /><path d="M1 7h20v3H1z" fill="#fbe08a" /></Svg>
      </Task>
      <Task className="w-[40px] ml-[9px]" underline>
        <svg width="24" height="24" viewBox="0 0 24 24">
          <path d="M12 12L2.4 5.5A12 12 0 0123 7H12z" fill="#e33e2b" />
          <path d="M12 12L2.4 5.5A12 12 0 009 23.6z" fill="#23a455" />
          <path d="M12 12h11A12 12 0 019 23.6z" fill="#f7c325" />
          <circle cx="12" cy="12" r="5.8" fill="#fff" />
          <circle cx="12" cy="12" r="4.5" fill="#3f83f1" />
        </svg>
      </Task>
      <Task className="w-[40px] ml-[9px]">
        <div className="w-[21px] h-[23px] bg-white border-2 border-black rounded-[3px] text-black font-bold text-[15px] leading-[18px] text-center font-['Liberation_Serif',serif]">N</div>
      </Task>
      <Task className="w-[40px] ml-[9px]">
        <Svg w={24} h={24}><path d="M18 3a10.5 10.5 0 10-2 18" stroke="#3f6fe0" strokeWidth="2.5" /><path d="M7 11l4 5 9-12" stroke="#f2b73f" strokeWidth="2.5" /></Svg>
      </Task>
      <Task className="w-[41px] ml-[9px]" underline>
        <Svg w={24} h={24}><circle cx="12" cy="12" r="10.5" stroke="#b76a9a" strokeWidth="2.5" /><path d="M12 1.5a10.5 10.5 0 018 4" stroke="#e78a3e" strokeWidth="2.5" /><circle cx="12" cy="12" r="5.5" fill="#e4e4e4" /><circle cx="12" cy="12" r="1.8" fill="#333" /></Svg>
      </Task>
      <Task className="w-[45px] ml-[4px]" active underline>
        <div className="w-[24px] h-[24px] bg-[#f4d9d4] text-[#c9262c] font-bold text-[22px] leading-[24px] text-center font-['Liberation_Sans',sans-serif]">A</div>
      </Task>
      <Task className="w-[40px] ml-[8px]" underline>
        <Svg w={22} h={24}><rect x="0" y="0" width="22" height="24" fill="#b3110f" /><path d="M4 18c3-2 5-6 6-13 0-2 2-2 2 0 0 5 3 8 6 9-4 0-8 1-11 3-2 2-4 2-3 1z" stroke="#fff" strokeWidth="1.2" /></Svg>
      </Task>
      <div className="ml-auto flex items-center h-full text-[#e4e6e9]">
        <Svg w={14} h={8}><path d="M1 7l6-6 6 6" stroke="#e6e6e6" strokeWidth="1.2" /></Svg>
        <div className="ml-[9px]">
          <Svg w={16} h={12}><path d="M4 11a3 3 0 010-6 4.5 4.5 0 018-1 3.5 3.5 0 011 7z" fill="#e8e8e8" /></Svg>
        </div>
        <div className="ml-[9px]">
          <Svg w={14} h={14}><path d="M1 13a12 12 0 0112-12M4 13a9 9 0 019-9M7 13a6 6 0 016-6" stroke="#cfd2d6" strokeDasharray="1.5 .8" /></Svg>
        </div>
        <div className="ml-[9px]">
          <Svg w={16} h={14}><path d="M1 5h3l4-4v12l-4-4H1zM10 4c1.5 2 1.5 4 0 6M12 2c2.5 3 2.5 7 0 10" stroke="#e2e4e7" /></Svg>
        </div>
        <span className="ml-[10px] text-[11.5px]">ENG</span>
        <div className="ml-[8px] w-[68px] text-center text-[11.5px] leading-[18px]">
          <div>01:57 PM</div>
          <div>28-04-2021</div>
        </div>
        <div className="ml-[14px] mr-[16px] relative w-[24px] h-[24px] flex items-start">
          <Svg w={16} h={16}><path d="M0 0h16v12H7l-3 3v-3H0z" fill="#fff" /><path d="M3 3h10M3 6h10M3 9h7" stroke="#1b2130" /></Svg>
          <div className="absolute left-[7px] top-[7px] w-[16px] h-[16px] rounded-full border border-[#9aa0a8] bg-[#1b2130] text-[11px] leading-[14px] text-center font-bold">1</div>
        </div>
      </div>
    </div>
  );
}

export default function App() {
  return (
    <div className="relative w-[1920px] h-[1080px] overflow-hidden flex flex-col bg-[#222933] text-[11.5px] font-['Open_Sans',sans-serif]">
      <TitleBar />
      <TabRow />
      <Ribbon />
      <DocTabs />
      <Canvas />
      <StatusBar />
      <Taskbar />
    </div>
  );
}
